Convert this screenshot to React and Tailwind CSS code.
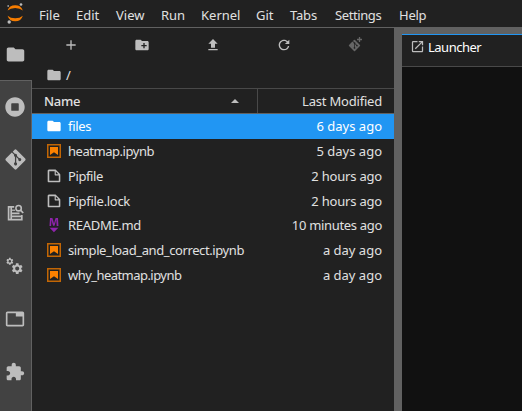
import React from "react";
import { FaGitAlt } from "react-icons/fa";

const PATHS = {
  folder: "M10 4H4c-1.1 0-1.99.9-1.99 2L2 18c0 1.1.9 2 2 2h16c1.1 0 2-.9 2-2V8c0-1.1-.9-2-2-2h-8l-2-2z",
  newFolder: "M20 6h-8l-2-2H4c-1.11 0-1.99.89-1.99 2L2 18c0 1.11.89 2 2 2h16c1.11 0 2-.89 2-2V8c0-1.11-.89-2-2-2zm-1 8h-3v3h-2v-3h-3v-2h3V9h2v3h3v2z",
  add: "M19 13h-6v6h-2v-6H5v-2h6V5h2v6h6v2z",
  upload: "M5 20h14v-2H5v2zM9 16h6v-6h4l-7-7-7 7h4z",
  refresh: "M9 13.5c-2.49 0-4.5-2.01-4.5-4.5S6.51 4.5 9 4.5c1.24 0 2.36.52 3.17 1.33L10 8h5V3l-1.76 1.76C12.15 3.68 10.66 3 9 3 5.69 3 3.01 5.69 3.01 9S5.69 15 9 15c2.97 0 5.43-2.16 5.9-5h-1.52c-.46 2-2.24 3.5-4.38 3.5z",
  running: "M256 8C119 8 8 119 8 256s111 248 248 248 248-111 248-248S393 8 256 8zm96 328c0 8.8-7.2 16-16 16H176c-8.8 0-16-7.2-16-16V176c0-8.8 7.2-16 16-16h160c8.8 0 16 7.2 16 16v160z",
  tab: "M21 3H3c-1.1 0-2 .9-2 2v14c0 1.1.9 2 2 2h18c1.1 0 2-.9 2-2V5c0-1.1-.9-2-2-2zm0 16H3V5h10v4h8v10z",
  extension: "M20.5 11H19V7c0-1.1-.9-2-2-2h-4V3.5C13 2.12 11.88 1 10.5 1S8 2.12 8 3.5V5H4c-1.1 0-1.99.9-1.99 2v3.8H3.5c1.49 0 2.7 1.21 2.7 2.7s-1.21 2.7-2.7 2.7H2V20c0 1.1.9 2 2 2h3.8v-1.5c0-1.49 1.21-2.7 2.7-2.7 1.49 0 2.7 1.21 2.7 2.7V22H17c1.1 0 2-.9 2-2v-4h1.5c1.38 0 2.5-1.12 2.5-2.5S21.88 11 20.5 11z",
  launcher: "M19 19H5V5h7V3H5a2 2 0 00-2 2v14a2 2 0 002 2h14c1.1 0 2-.9 2-2v-7h-2v7zM14 3v2h3.59l-9.83 9.83 1.41 1.41L19 6.41V10h2V3h-7z",
  file: "M19.3 8.2l-5.5-5.5c-.3-.3-.7-.5-1.2-.5H3.9c-.8.1-1.6.9-1.6 1.8v14.1c0 .9.7 1.6 1.6 1.6h14.2c.9 0 1.6-.7 1.6-1.6V9.4c.1-.5-.1-.9-.4-1.2zm-5.8-3.3l3.4 3.6h-3.4V4.9zm3.9 12.7H4.7c-.1 0-.2 0-.2-.2V4.7c0-.2.1-.3.2-.3h7.2v4.4s0 .8.3 1.1c.3.3 1.1.3 1.1.3h4.3v7.2s-.1.2-.2.2z",
  markdown: "M5 14.9h12l-6.1 6zm9.4-6.8c0-1.3-.1-2.9-.1-4.5-.4 1.4-.9 2.9-1.3 4.3l-1.3 4.3h-2L8.5 7.9c-.4-1.3-.7-2.9-1-4.3-.1 1.6-.1 3.2-.2 4.6L7 12.4H4.8l.7-11h3.3L10 5c.4 1.2.7 2.7 1 3.9.3-1.2.7-2.6 1-3.9l1.2-3.7h3.3l.6 11h-2.4l-.3-4.2z",
  gear: "M19.14 12.94c.04-.3.06-.61.06-.94 0-.32-.02-.64-.07-.94l2.03-1.58a.49.49 0 00.12-.61l-1.92-3.32a.488.488 0 00-.59-.22l-2.39.96c-.5-.38-1.03-.7-1.62-.94l-.36-2.54a.484.484 0 00-.48-.41h-3.84c-.24 0-.43.17-.47.41l-.36 2.54c-.59.24-1.13.57-1.62.94l-2.39-.96c-.22-.08-.47 0-.59.22L2.74 8.87c-.12.21-.08.47.12.61l2.03 1.58c-.05.3-.09.63-.09.94s.02.64.07.94l-2.03 1.58a.49.49 0 00-.12.61l1.92 3.32c.12.22.37.29.59.22l2.39-.96c.5.38 1.03.7 1.62.94l.36 2.54c.05.24.24.41.48.41h3.84c.24 0 .44-.17.47-.41l.36-2.54c.59-.24 1.13-.56 1.62-.94l2.39.96c.22.08.47 0 .59-.22l1.92-3.32c.12-.22.07-.47-.12-.61l-2.01-1.58zM12 15.6c-1.98 0-3.6-1.62-3.6-3.6s1.62-3.6 3.6-3.6 3.6 1.62 3.6 3.6-1.62 3.6-3.6 3.6z",
};

function Icon({ name, box = 24, className }) {
  return (
    <svg viewBox={`0 0 ${box} ${box}`} fill="currentColor" className={`shrink-0 ${className}`}>
      <path d={PATHS[name]} />
    </svg>
  );
}

function Jupyter() {
  return (
    <svg viewBox="0 0 32 27" className="h-[27px] w-8 shrink-0">
      <path d="M7.6 10.6Q9.2 5.2 15.2 5.2T22.8 10.6Q20 8.1 15.2 8.1T7.6 10.6ZM7.6 15.7Q9.2 21.2 15.2 21.2T22.8 15.7Q20 18.3 15.2 18.3T7.6 15.7Z" fill="#f57c00" />
      <circle cx="21" cy="4.5" r="1.35" fill="#bdbdbd" />
      <circle cx="8.2" cy="6" r="0.9" fill="#9e9e9e" />
      <circle cx="9.2" cy="22" r="1.7" fill="#bdbdbd" />
    </svg>
  );
}

function NotebookIcon() {
  return (
    <svg viewBox="0 0 16 16" className="size-4 shrink-0">
      <path d="M1.75 1.75h12.5v12.5H1.75z" fill="none" stroke="#c26605" strokeWidth="1.5" />
      <path d="M4 4h8v8L8 9.2 4 12z" fill="#fb8100" />
    </svg>
  );
}

function TableSearch() {
  return (
    <svg viewBox="0 0 18 18" className="size-[18px]" fill="none" stroke="currentColor">
      <path d="M8.2 2.8H2.6v12.8h13.2V11" strokeWidth="1.7" />
      <path d="M5.2 3v12.5M5.5 9.3h8M5.5 12.3h10" strokeWidth="1.7" />
      <path d="M5.5 6.2H9" strokeWidth="1.2" />
      <circle cx="12.6" cy="4.2" r="2.7" strokeWidth="1.6" />
      <path d="M14.5 6.2l2.7 2.8" strokeWidth="1.8" />
    </svg>
  );
}

function Gears() {
  return (
    <svg viewBox="0 0 18 18" className="size-[18px]" fill="currentColor">
      <path transform="translate(-.5 0) scale(.36)" d={PATHS.gear} />
      <path transform="translate(4.5 4.9) scale(.56)" d={PATHS.gear} />
    </svg>
  );
}

function GitPlus() {
  return (
    <div className="flex items-start text-[#666]">
      <FaGitAlt className="size-[13px]" />
      <svg viewBox="0 0 5 5" className="-ml-1 -mt-0.5 size-[5px]" stroke="currentColor" strokeWidth="1.3"><path d="M2.5 0v5M0 2.5h5" /></svg>
    </div>
  );
}

const MENU = [
  ["File", "w-[37px]"],
  ["Edit", "w-[40px]"],
  ["View", "w-[45px]"],
  ["Run", "w-[40px]"],
  ["Kernel", "w-[55px]"],
  ["Git", "w-[34px]"],
  ["Tabs", "w-[45px] tracking-[-0.2px]"],
  ["Settings", "w-[64px] tracking-[-0.4px]"],
  ["Help", "tracking-[-0.25px]"],
];

const FILES = [
  ["folder", "files", "6 days ago", "tracking-[-0.3px]", "tracking-normal"],
  ["notebook", "heatmap.ipynb", "5 days ago", "tracking-[-0.46px]", "tracking-normal"],
  ["file", "Pipfile", "2 hours ago", "tracking-[-0.4px]", "tracking-[-0.2px]"],
  ["file", "Pipfile.lock", "2 hours ago", "tracking-[-0.3px]", "tracking-[-0.2px]"],
  ["markdown", "README.md", "10 minutes ago", "tracking-[-0.3px]", "tracking-[-0.32px]"],
  ["notebook", "simple_load_and_correct.ipynb", "a day ago", "tracking-[-0.4px]", "tracking-normal"],
  ["notebook", "why_heatmap.ipynb", "a day ago", "tracking-[-0.55px]", "tracking-normal"],
];

function FileIcon({ kind }) {
  if (kind === "notebook") return <NotebookIcon />;
  if (kind === "folder") return <Icon name="folder" className="size-4 text-white" />;
  if (kind === "markdown") return <Icon name="markdown" box={22} className="size-4 text-[#8e24aa]" />;
  return <Icon name="file" box={22} className="size-4 text-[#bdbdbd]" />;
}

export default function App() {
  return (
    <div className="flex h-[411px] w-[522px] flex-col overflow-hidden bg-[#212121] font-['Noto_Sans',sans-serif] text-[13px] leading-4 text-[#e0e0e0]">
      <header className="flex h-7 shrink-0 border-b border-[#616161]">
        <Jupyter />
        <nav className="flex pl-[7px] pt-[7px]">
          {MENU.map(([label, style]) => (
            <span key={label} className={style}>{label}</span>
          ))}
        </nav>
      </header>

      <div className="flex min-h-0 flex-1">
        <aside className="flex w-8 shrink-0 flex-col text-[#bdbdbd]">
          <div className="flex h-[52px] shrink-0 items-center justify-center pr-0.5"><Icon name="folder" className="size-[21px]" /></div>
          <div className="flex flex-1 flex-col border-r border-t border-[#616161] bg-[#424242] *:flex *:h-[53px] *:items-center *:justify-center *:pb-0.5 *:pr-px">
            <div><Icon name="running" box={512} className="size-5" /></div>
            <div><FaGitAlt className="size-[23px]" /></div>
            <div><TableSearch /></div>
            <div><Gears /></div>
            <div><Icon name="tab" className="size-5" /></div>
            <div><Icon name="extension" className="size-5" /></div>
          </div>
        </aside>

        <section className="flex w-[362px] shrink-0 flex-col">
          <div className="flex h-[34px] items-center pl-1 pr-1 text-[#bdbdbd] *:flex *:flex-1 *:justify-center">
            <div><Icon name="add" className="size-4" /></div>
            <div><Icon name="newFolder" className="size-4" /></div>
            <div><Icon name="upload" className="size-4" /></div>
            <div><Icon name="refresh" box={18} className="size-4" /></div>
            <div><GitPlus /></div>
          </div>
          <div className="flex h-[26px] items-center gap-1 pl-3.5"><Icon name="folder" className="size-4 text-[#bdbdbd]" /><span>/</span></div>
          <div className="flex h-[26px] shrink-0 border-b border-t border-[#494949] border-b-[#616161]">
            <div className="flex flex-1 items-center justify-between border-r border-[#494949] pl-3 pr-[18px]">
              <span className="font-medium tracking-[-0.3px]">Name</span>
              <svg viewBox="0 0 8 4" className="h-1 w-2 fill-[#bdbdbd]"><path d="M0 4L4 0l4 4z" /></svg>
            </div>
            <div className="flex w-[136px] items-center justify-end pr-3 tracking-[-0.2px]">Last Modified</div>
          </div>
          <div className="flex h-[173px] flex-col">
            {FILES.map(([kind, name, date, nameTracking, dateTracking], i) => (
              <div key={name} className={`flex flex-1 items-center pl-3.5 pr-3 ${i === 0 ? "bg-[#2196f3] text-white" : ""}`}>
                <FileIcon kind={kind} />
                <span className={`ml-1.5 flex-1 ${nameTracking}`}>{name}</span>
                <span className={dateTracking}>{date}</span>
              </div>
            ))}
          </div>
        </section>

        <div className="w-2 shrink-0 bg-[#616161]" />

        <main className="flex min-w-0 flex-1 flex-col bg-[#111111]">
          <div className="h-1.5 bg-[#616161]" />
          <div className="flex h-[33px] items-center gap-[3px] border-b border-t border-b-[#494949] border-t-[#2196f3] bg-[#212121] pb-2 pl-2">
            <Icon name="launcher" className="size-[15px] text-[#bdbdbd]" />
            <span className="tracking-[-0.5px] text-white">Launcher</span>
          </div>
        </main>
      </div>
    </div>
  );
}
